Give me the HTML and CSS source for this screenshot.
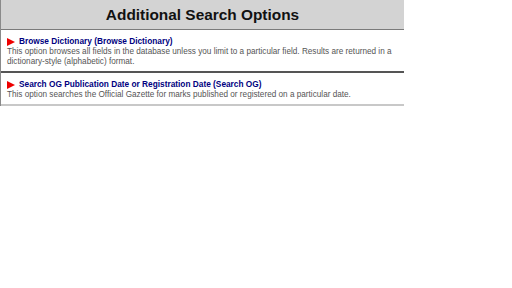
FILE: index.html
```html
<!DOCTYPE html>
<html lang="en">
<head>
  <meta charset="UTF-8" />
  <title>Additional Search Options</title>
  <link rel="stylesheet" href="styles.css">
</head>
<body>
  <div class="options">
    <h1 class="options-title">Additional Search Options</h1>

    <div class="option">
      <a class="option-link" href="#"><span class="flag"></span>Browse Dictionary (Browse Dictionary)</a>
      <p class="option-desc">This option browses all fields in the database unless you limit to a particular field. Results are returned in a dictionary-style (alphabetic) format.</p>
    </div>

    <div class="option option-last">
      <a class="option-link" href="#"><span class="flag"></span>Search OG Publication Date or Registration Date (Search OG)</a>
      <p class="option-desc">This option searches the Official Gazette for marks published or registered on a particular date.</p>
    </div>
  </div>
</body>
</html>
```

FILE: styles.css
```css
* {
  margin: 0;
  padding: 0;
  box-sizing: border-box;
}
body {
  background: #fff;
  font-family: 'Liberation Sans', Arial, sans-serif;
}
.options {
  width: 404px;
  border-left: 1px solid #8a8a8a;
}
.options-title {
  background: #d3d3d3;
  border-bottom: 1px solid #7a7a7a;
  height: 30px;
  line-height: 29px;
  text-align: center;
  font-size: 15.4px;
  font-weight: bold;
  color: #111;
}
.option {
  padding: 6px 0 4px 6px;
  border-bottom: 2px solid #555;
}
.option-last {
  border-bottom-color: #c8c8c8;
}
.option-link {
  display: flex;
  align-items: center;
  gap: 4px;
  font-size: 8.3px;
  font-weight: bold;
  color: #000080;
  text-decoration: none;
  line-height: 11px;
}
.flag {
  width: 0;
  height: 0;
  border-top: 4px solid transparent;
  border-bottom: 4px solid transparent;
  border-left: 8px solid #ee0000;
}
.option-desc {
  font-size: 8.2px;
  line-height: 10px;
  color: #555;
}
```
